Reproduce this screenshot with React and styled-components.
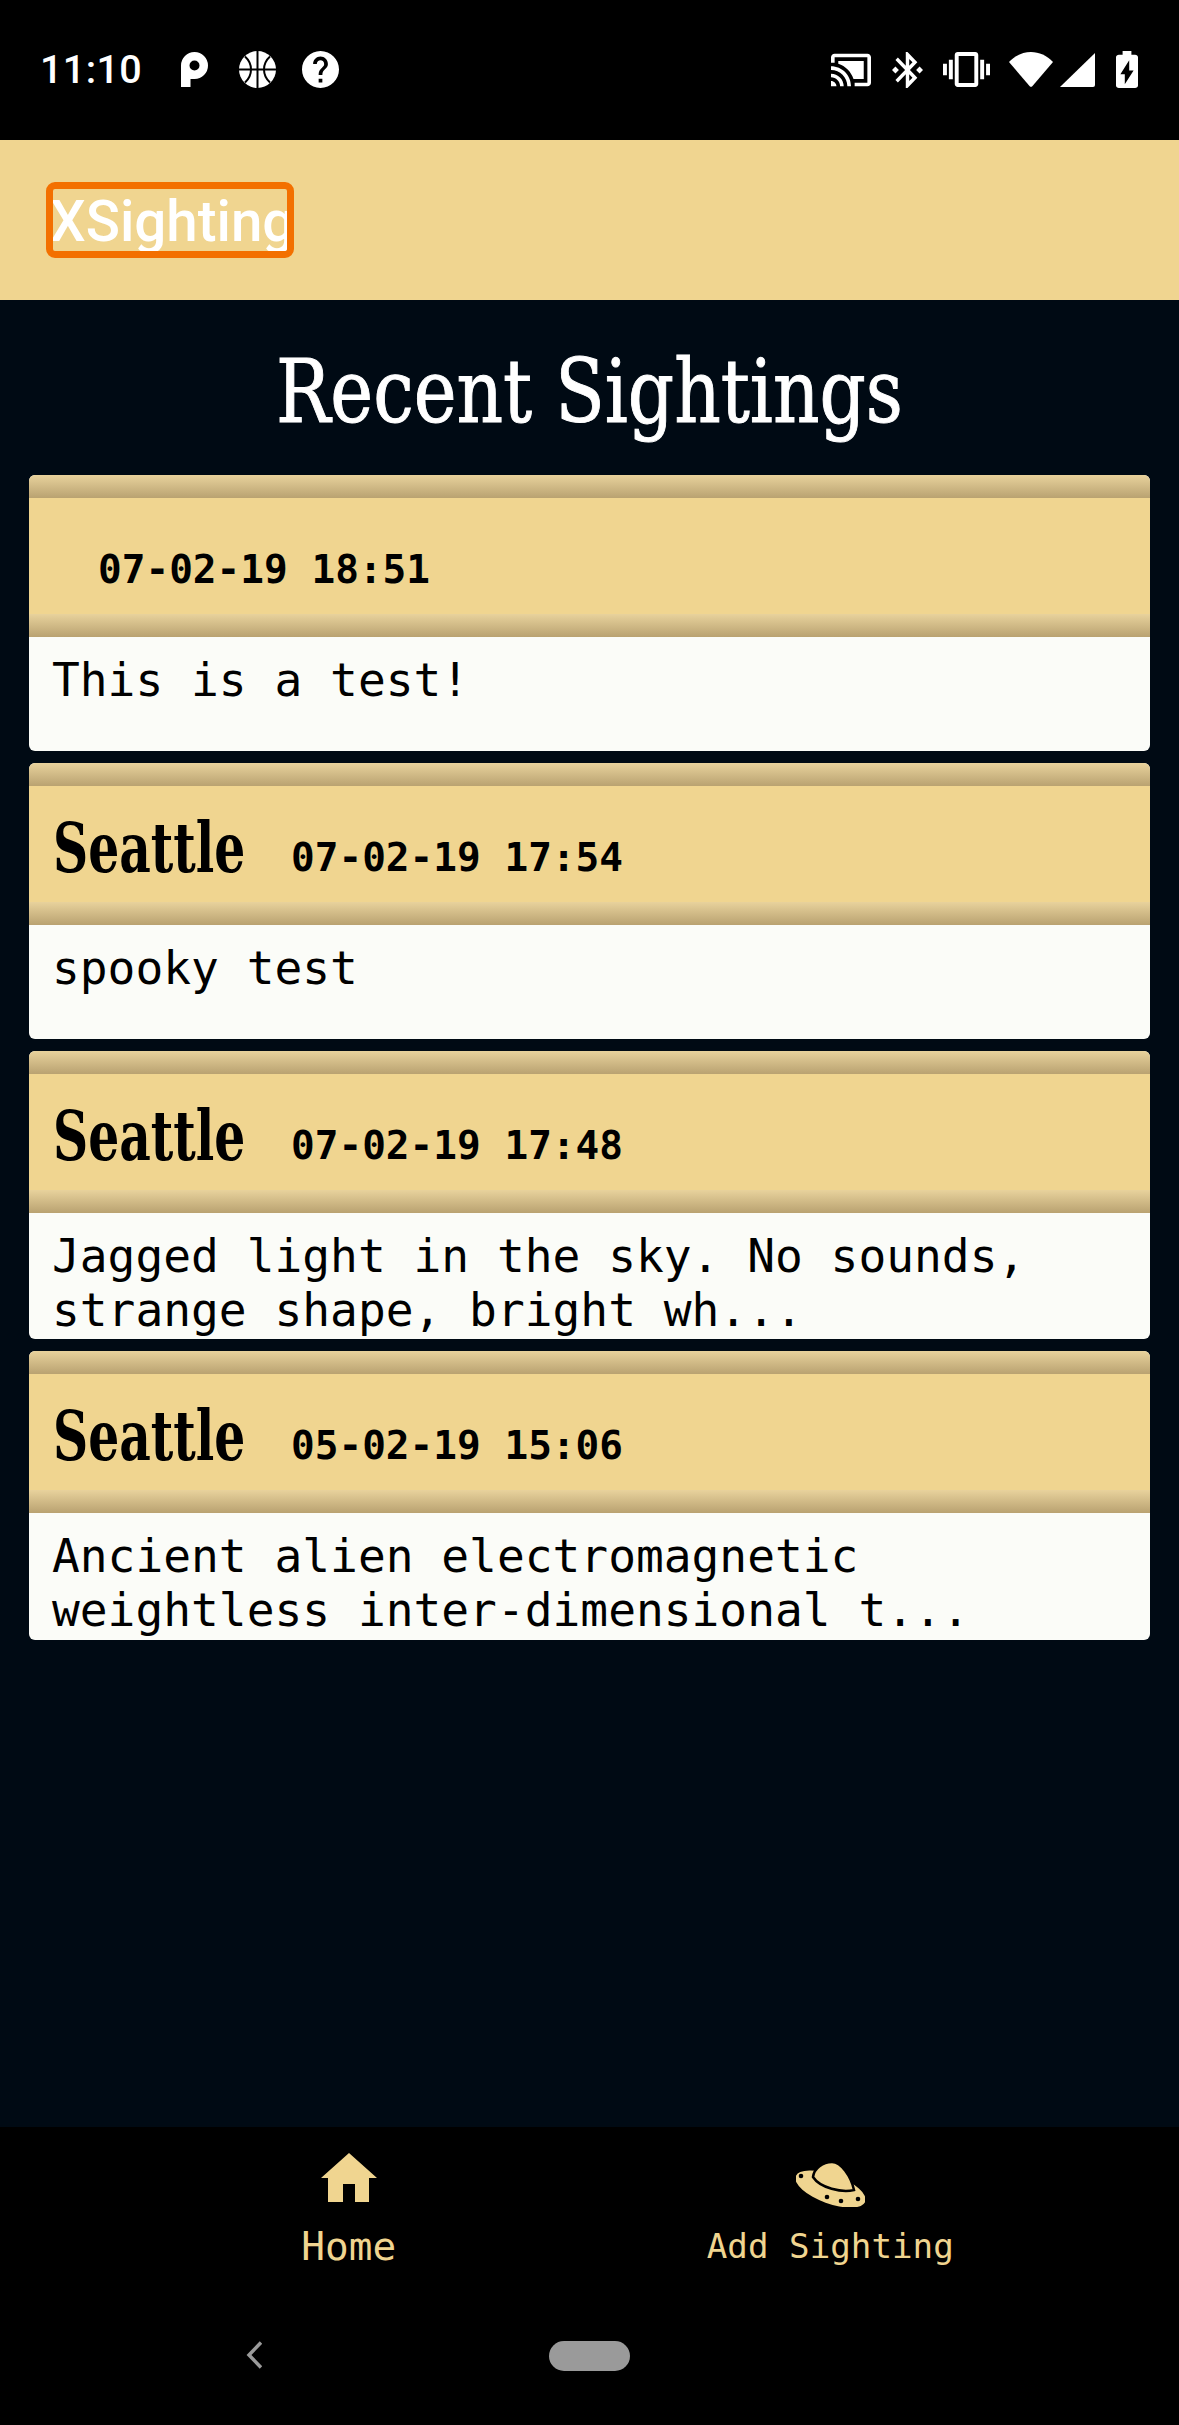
import React from "react";
import styled, { createGlobalStyle } from "styled-components";

const GOLD = "#f0d590";
const INK = "#000a14";

const Global = createGlobalStyle`
  html, body { margin: 0; padding: 0; background: #000; }
  #root { width: 1179px; height: 2425px; }
  * { box-sizing: border-box; }
`;

const Page = styled.div`
  width: 1179px;
  height: 2425px;
  display: flex;
  flex-direction: column;
  background: ${INK};
  overflow: hidden;
`;

const StatusBar = styled.div`
  height: 140px;
  flex: none;
  background: #000;
  display: flex;
  align-items: flex-start;
  justify-content: space-between;
  padding: 51px 41px 0 40px;
`;

const StatusGroup = styled.div`
  display: flex;
  align-items: center;
  height: 37px;
`;

const Clock = styled.span`
  font: 500 39.5px/37px Roboto, sans-serif;
  color: #fff;
  width: 141px;
  letter-spacing: 0.4px;
`;

const StatusIcon = styled.svg`
  display: block;
  flex: none;
  width: ${(p) => p.$w}px;
  height: ${(p) => p.$h}px;
  margin-left: ${(p) => p.$ml || 0}px;
  fill: #fff;
`;

const AppBar = styled.header`
  height: 160px;
  flex: none;
  background: ${GOLD};
  display: flex;
  align-items: flex-start;
  padding: 42px 0 0 46px;
`;

const Brand = styled.div`
  width: 248px;
  height: 76px;
  border: 7px solid #f37000;
  border-radius: 9px;
  overflow: hidden;
  font: 500 56.5px/66px Roboto, sans-serif;
  color: #fff;
  white-space: nowrap;
  text-indent: -3px;
`;

const Main = styled.main`
  flex: 1;
  min-height: 0;
  padding: 0 29px;
  display: flex;
  flex-direction: column;
`;

const Title = styled.h1`
  margin: 0;
  height: 175px;
  display: flex;
  justify-content: center;
  align-items: flex-start;
  padding-top: 45px;
  font: 400 88px/94px "DejaVu Serif", serif;
  color: #fff;
  white-space: nowrap;
  -webkit-text-stroke: 1px #fff;
`;

const TitleText = styled.span`
  display: inline-block;
  transform: scaleX(0.822);
`;

const CardList = styled.div`
  display: flex;
  flex-direction: column;
  gap: 12px;
`;

const Card = styled.article`
  border-radius: 6px;
  overflow: hidden;
  background: #fbfcf8;
`;

const Rail = styled.div`
  height: 23px;
  background: linear-gradient(#e8d29c, #b9a271);
`;

const CardHead = styled.div`
  height: 116px;
  background: ${GOLD};
  display: flex;
  align-items: flex-start;
  padding: 0 24px;
  color: #000;
`;

const Place = styled.span`
  font: 700 70px/78px "DejaVu Serif", serif;
  width: 239px;
  padding-top: 23px;
  white-space: nowrap;
  display: block;
`;

const PlaceText = styled.span`
  display: inline-block;
  transform: scaleX(0.696);
  transform-origin: left center;
`;

const Stamp = styled.span`
  font: 700 39.4px/46px "DejaVu Sans Mono", monospace;
  padding-top: 48px;
  margin-left: ${(p) => (p.$empty ? 45 : -1)}px;
`;

const CardBody = styled.div`
  height: ${(p) => p.$h}px;
  overflow: hidden;
  padding: 16px 23px 0;
  font: 400 46.2px/54px "DejaVu Sans Mono", monospace;
  color: #000;
`;

const TabBar = styled.nav`
  flex: none;
  height: 183px;
  background: #000;
  display: grid;
  grid-template-columns: 1fr 1fr;
  padding: 0 108px;
`;

const Tab = styled.div`
  display: flex;
  flex-direction: column;
  align-items: center;
  color: ${GOLD};
  font-family: "DejaVu Sans Mono", monospace;
`;

const IconSlot = styled.div`
  height: 94px;
  padding-top: ${(p) => p.$top}px;
  flex: none;
`;

const TabIcon = styled.svg`
  display: block;
  width: ${(p) => p.$w}px;
  height: ${(p) => p.$h}px;
`;

const TabLabel = styled.span`
  font-size: ${(p) => p.$size}px;
  line-height: 50px;
`;

const NavBar = styled.div`
  flex: none;
  height: 115px;
  background: #000;
  display: flex;
  align-items: flex-start;
  padding: 31px 0 0 246px;
`;

const Back = styled.svg`
  display: block;
  width: 16px;
  height: 28px;
  fill: none;
  stroke: #9a9a9a;
  stroke-width: 3.5;
`;

const Pill = styled.div`
  width: 81px;
  height: 30px;
  border-radius: 15px;
  background: #9a9a9a;
  margin-left: 287px;
`;

const sightings = [
  { place: "", stamp: "07-02-19 18:51", lines: ["This is a test!"], body: 114 },
  { place: "Seattle", stamp: "07-02-19 17:54", lines: ["spooky test"], body: 114 },
  { place: "Seattle", stamp: "07-02-19 17:48", lines: ["Jagged light in the sky. No sounds,", "strange shape, bright wh..."], body: 126 },
  { place: "Seattle", stamp: "05-02-19 15:06", lines: ["Ancient alien electromagnetic", "weightless inter-dimensional t..."], body: 127 },
];

function Sighting({ place, stamp, lines, body }) {
  return (
    <Card>
      <Rail />
      <CardHead>
        {place && (
          <Place>
            <PlaceText>{place}</PlaceText>
          </Place>
        )}
        <Stamp $empty={!place}>{stamp}</Stamp>
      </CardHead>
      <Rail />
      <CardBody $h={body}>
        {lines.map((l) => (
          <div key={l}>{l}</div>
        ))}
      </CardBody>
    </Card>
  );
}

export default function App() {
  return (
    <Page>
      <Global />
      <StatusBar>
        <StatusGroup>
          <Clock>11:10</Clock>
          <StatusIcon $w={27} $h={35} viewBox="0 0 27 35">
            <path fillRule="evenodd" d="M0 13.5A13.5 13.5 0 1 1 13.5 27H9.5V35H0ZM13.5 8.5a5 5 0 1 0 0 10a5 5 0 0 0 0-10Z" />
          </StatusIcon>
          <StatusIcon $w={37} $h={37} $ml={31} viewBox="0 0 37 37">
            <circle cx="18.5" cy="18.5" r="18.5" />
            <path d="M18.5 0V37M0 18.5H37M6 5.5C11 10 12 15 12 18.5S11 27 6 31.5M31 5.5C26 10 25 15 25 18.5S26 27 31 31.5" fill="none" stroke="#000" strokeWidth="2" />
          </StatusIcon>
          <StatusIcon $w={37} $h={37} $ml={26} viewBox="2 2 20 20">
            <path d="M12 2C6.48 2 2 6.48 2 12s4.48 10 10 10 10-4.48 10-10S17.52 2 12 2zm1 17h-2v-2h2v2zm2.07-7.75l-.9.92C13.45 12.9 13 13.5 13 15h-2v-.5c0-1.1.45-2.1 1.17-2.83l1.24-1.26c.37-.36.59-.86.59-1.41 0-1.1-.9-2-2-2s-2 .9-2 2H8c0-2.21 1.79-4 4-4s4 1.79 4 4c0 .88-.36 1.68-.93 2.25z" />
          </StatusIcon>
        </StatusGroup>
        <StatusGroup>
          <StatusIcon $w={40} $h={34} viewBox="1 3 22 18">
            <path d="M1 18v3h3c0-1.66-1.34-3-3-3zm0-4v2c2.76 0 5 2.24 5 5h2c0-3.87-3.13-7-7-7zm18-7H5v1.63c3.96 1.28 7.09 4.41 8.37 8.37H19V7zM1 10v2c4.97 0 9 4.03 9 9h2c0-6.08-4.93-11-11-11zm20-7H3c-1.1 0-2 .9-2 2v3h2V5h18v14h-7v2h7c1.1 0 2-.9 2-2V5c0-1.1-.9-2-2-2z" />
          </StatusIcon>
          <StatusIcon $w={31} $h={36} $ml={21} viewBox="3 2 18 20" preserveAspectRatio="none">
            <path d="M7 12l-2-2-2 2 2 2 2-2zm10.71-4.29L12 2h-1v7.59L6.41 5 5 6.41 10.59 12 5 17.59 6.41 19 11 14.41V22h1l5.71-5.71-4.3-4.29 4.3-4.29zM13 5.83l1.88 1.88L13 9.59V5.83zm1.88 10.46L13 18.17v-3.76l1.88 1.88zM19 10l-2 2 2 2 2-2-2-2z" />
          </StatusIcon>
          <StatusIcon $w={47} $h={35} $ml={20} viewBox="0 3 24 18" preserveAspectRatio="none">
            <path d="M0 15h2V9H0v6zm3 2h2V7H3v10zm19-8v6h2V9h-2zm-3 8h2V7h-2v10zM16.5 3h-9C6.67 3 6 3.67 6 4.5v15c0 .83.67 1.5 1.5 1.5h9c.83 0 1.5-.67 1.5-1.5v-15c0-.83-.67-1.5-1.5-1.5zM16 19H8V5h8v14z" />
          </StatusIcon>
          <StatusIcon $w={44} $h={35} $ml={19} viewBox="0 0 44 35">
            <path d="M0 10C6 3.500 14 0 22 0S38 3.500 44 10L23.500 34a2 2 0 0 1-3 0Z" />
          </StatusIcon>
          <StatusIcon $w={35} $h={34} $ml={7} viewBox="0 0 35 34">
            <path d="M35 0V32a2 2 0 0 1-2 2H0Z" />
          </StatusIcon>
          <StatusIcon $w={22} $h={37} $ml={21} viewBox="7 2 10 20" preserveAspectRatio="none">
            <path d="M15.670 4H14V2h-4v2H8.330C7.600 4 7 4.600 7 5.330v15.330C7 21.400 7.600 22 8.330 22h7.330c.74 0 1.340-.6 1.340-1.330V5.330C17 4.600 16.400 4 15.670 4zM11 20v-5.500H9L13 7v5.500h2L11 20z" />
          </StatusIcon>
        </StatusGroup>
      </StatusBar>
      <AppBar>
        <Brand>XSighting</Brand>
      </AppBar>
      <Main>
        <Title>
          <TitleText>Recent Sightings</TitleText>
        </Title>
        <CardList>
          {sightings.map((s) => (
            <Sighting key={s.stamp} {...s} />
          ))}
        </CardList>
      </Main>
      <TabBar>
        <Tab>
          <IconSlot $top={26}>
            <TabIcon $w={56} $h={49} viewBox="0 0 56 49">
              <path fill={GOLD} fillRule="evenodd" d="M28 0L56 25H48V49H34V31H22V49H7V25H0Z" />
            </TabIcon>
          </IconSlot>
          <TabLabel $size={39.4}>Home</TabLabel>
        </Tab>
        <Tab>
          <IconSlot $top={35}>
            <TabIcon $w={69} $h={45} viewBox="0 0 69 45">
              <ellipse cx="34.500" cy="27" rx="37" ry="14.500" transform="rotate(20 34.500 27)" fill={GOLD} />
              <path d="M17 15C18 6 27 0 36 0S55 14 58 28C46 31 24 26 17 15Z" fill={GOLD} stroke="#000" strokeWidth="2.500" />
              <circle cx="5" cy="14" r="2.300" fill="#000" />
              <circle cx="31" cy="35" r="2.300" fill="#000" />
              <circle cx="62" cy="37" r="2.300" fill="#000" />
              <circle cx="45" cy="39" r="2.300" fill="#000" />
            </TabIcon>
          </IconSlot>
          <TabLabel $size={34.2}>Add Sighting</TabLabel>
        </Tab>
      </TabBar>
      <NavBar>
        <Back viewBox="0 0 16 28">
          <path d="M15 1.500L3 14L15 26.500" />
        </Back>
        <Pill />
      </NavBar>
    </Page>
  );
}
